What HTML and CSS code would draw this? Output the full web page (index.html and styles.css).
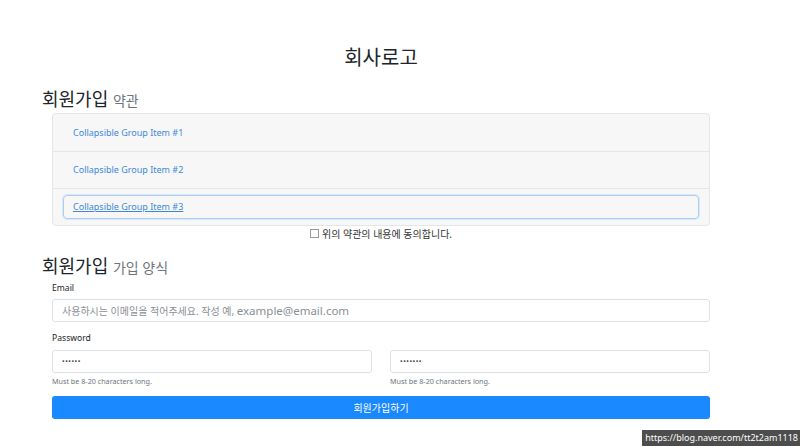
FILE: index.html
```html
<!DOCTYPE html>
<html lang="ko">
<head>
<meta charset="utf-8">
<link rel="stylesheet" href="styles.css">
</head>
<body>
<div class="page">
  <h1 class="logo">회사로고</h1>
  <h2 class="section-title">회원가입 <small>약관</small></h2>
  <div class="inner">
    <div class="accordion">
      <div class="acc-row"><a class="acc-link">Collapsible Group Item #1</a></div>
      <div class="acc-row"><a class="acc-link">Collapsible Group Item #2</a></div>
      <div class="acc-row"><a class="acc-link focused">Collapsible Group Item #3</a></div>
    </div>
    <label class="agree"><span class="box"></span>위의 약관의 내용에 동의합니다.</label>
  </div>
  <h2 class="section-title second">회원가입 <small>가입 양식</small></h2>
  <div class="inner form">
    <div class="label">Email</div>
    <div class="input placeholder">사용하시는 이메일을 적어주세요. 작성 예,&nbsp;<span class="en">example@email.com</span></div>
    <div class="label pw">Password</div>
    <div class="pw-row">
      <div class="pw-col">
        <div class="input dots">••••••</div>
        <div class="help">Must be 8-20 characters long.</div>
      </div>
      <div class="pw-col">
        <div class="input dots">•••••••</div>
        <div class="help">Must be 8-20 characters long.</div>
      </div>
    </div>
    <div class="btn">회원가입하기</div>
  </div>
</div>
<div class="watermark">https://blog.naver.com/tt2t2am1118</div>
</body>
</html>
```
FILE: styles.css
```css
html, body {
  margin: 0;
  padding: 0;
  background: #ffffff;
  height: 446px;
  overflow: hidden;
}
body {
  font-family: "Noto Sans", "Noto Sans CJK KR", sans-serif;
  color: #212529;
  position: relative;
}
.page {
  width: 678px;
  margin-left: 42px;
  display: flex;
  flex-direction: column;
}
.logo {
  margin: 0;
  padding-top: 45px;
  height: 26px;
  line-height: 26px;
  font-size: 20px;
  font-weight: 400;
  text-align: center;
}
.section-title {
  margin: 0;
  margin-top: 16px;
  height: 24px;
  line-height: 24px;
  font-size: 18px;
  font-weight: 400;
  color: #212529;
}
.section-title small {
  font-size: 14px;
  color: #6c757d;
}
.section-title.second {
  margin-top: 14px;
}
.inner {
  padding: 0 10px;
  display: flex;
  flex-direction: column;
}
.accordion {
  margin-top: 2px;
  background: #f7f7f7;
  border: 1px solid #e6e6e6;
  border-radius: 4px;
  display: flex;
  flex-direction: column;
}
.acc-row {
  box-sizing: border-box;
  height: 37px;
  display: flex;
  align-items: center;
  padding: 0 10px;
  border-top: 1px solid #e6e6e6;
}
.acc-row:first-child {
  border-top: none;
}
.acc-link {
  font-size: 9px;
  color: #3d89d8;
  padding: 0 9px;
  height: 22px;
  line-height: 22px;
  flex: 1;
  border: 1px solid transparent;
  border-radius: 4px;
}
.acc-link.focused {
  text-decoration: underline;
  border-color: #a9cdf3;
  box-shadow: 0 0 0 1px #d8e8f8;
}
.agree {
  align-self: center;
  display: flex;
  align-items: center;
  gap: 3px;
  font-size: 10px;
  color: #333;
  height: 14px;
}
.agree .box {
  width: 7px;
  height: 7px;
  border: 1px solid #999;
  background: #fff;
}
.form {
  margin-top: 3px;
}
.label {
  font-size: 8.6px;
  color: #212529;
  height: 14px;
  line-height: 14px;
}
.label.pw {
  margin-top: 9px;
}
.input {
  margin-top: 4px;
  height: 21px;
  border: 1px solid #dee2e6;
  border-radius: 3px;
  background: #fff;
  display: flex;
  align-items: center;
  padding: 0 9px;
  font-size: 10px;
  white-space: nowrap;
}
.placeholder {
  color: #8a8f94;
}
.placeholder .en {
  font-size: 11.5px;
}
.dots {
  color: #444;
  font-size: 7px;
  letter-spacing: 0.5px;
}
.pw-row {
  display: flex;
  gap: 18px;
  margin-top: 1px;
}
.pw-col {
  flex: 1;
  display: flex;
  flex-direction: column;
}
.help {
  margin-top: 2px;
  font-size: 7.2px;
  color: #6c757d;
  height: 12px;
  line-height: 12px;
}
.btn {
  margin-top: 9px;
  height: 23px;
  background: #1a88ff;
  border-radius: 3px;
  color: #fff;
  font-size: 10px;
  display: flex;
  align-items: center;
  justify-content: center;
}
.watermark {
  position: absolute;
  right: 0;
  top: 430px;
  height: 16px;
  padding: 0 2px 0 3px;
  background: #4d4d4d;
  color: #fff;
  font-size: 9px;
  line-height: 16px;
  font-family: "Noto Sans", sans-serif;
}
```
